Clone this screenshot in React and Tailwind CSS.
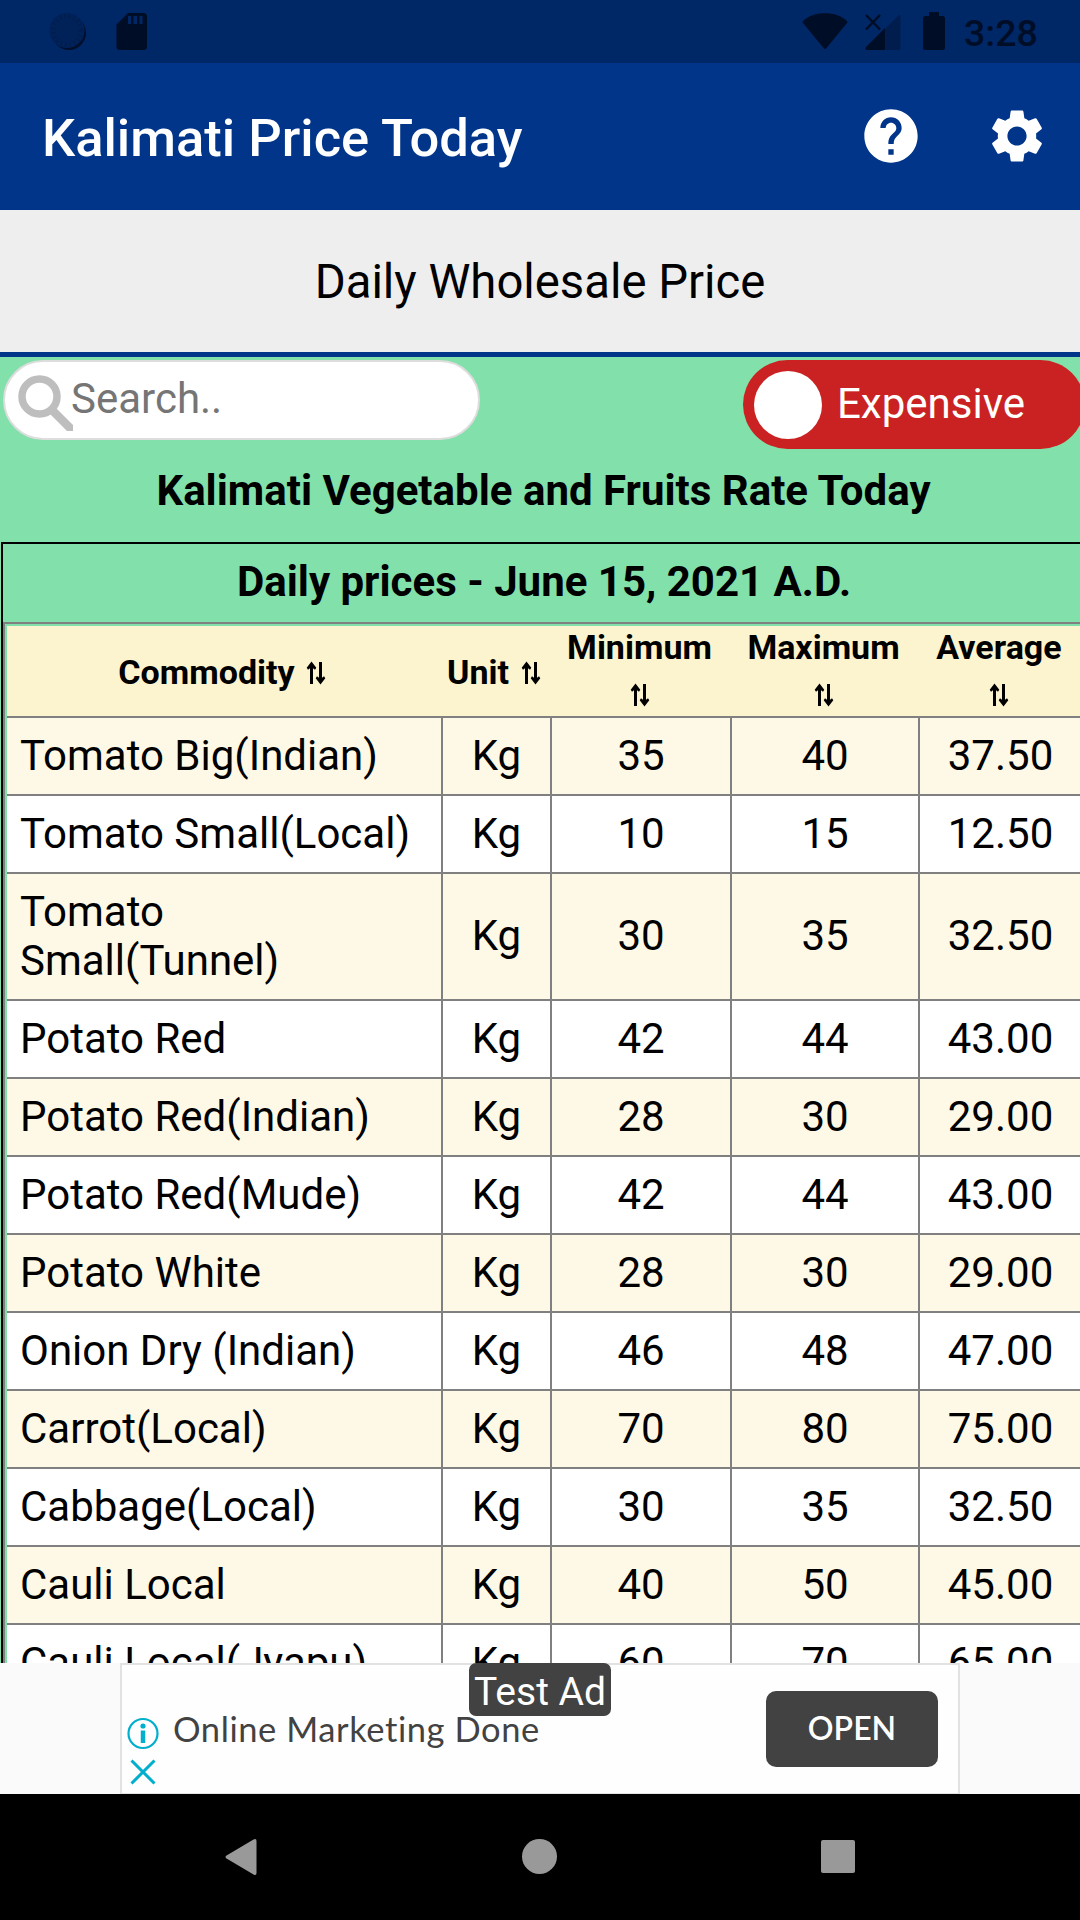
const rows = [
  ["Tomato Big(Indian)", "35", "40", "37.50"],
  ["Tomato Small(Local)", "10", "15", "12.50"],
  ["Tomato Small(Tunnel)", "30", "35", "32.50"],
  ["Potato Red", "42", "44", "43.00"],
  ["Potato Red(Indian)", "28", "30", "29.00"],
  ["Potato Red(Mude)", "42", "44", "43.00"],
  ["Potato White", "28", "30", "29.00"],
  ["Onion Dry (Indian)", "46", "48", "47.00"],
  ["Carrot(Local)", "70", "80", "75.00"],
  ["Cabbage(Local)", "30", "35", "32.50"],
  ["Cauli Local", "40", "50", "45.00"],
  ["Cauli Local(Jyapu)", "60", "70", "65.00"],
];

const columns = "grid grid-cols-[434px_107px_178px_186px_161px] gap-x-[2px]";

function SortArrows() {
  return (
    <svg className="block h-[24px] w-[20px] shrink-0" viewBox="0 0 20 24">
      <path d="M5.500 .5L10.300 6.800L9 8.800L7 7.200V23H4V7.200L2 8.800L.7 6.800zM14.500 23.500L9.700 17.200L11 15.200L13 16.800V1H16V16.800L18 15.200L19.300 17.200z" />
    </svg>
  );
}

function StatusBar() {
  return (
    <div className="flex h-[63px] items-start bg-[#002766] pl-[49px] text-[#000d26]">
      <svg className="mt-[12px] h-[38px] w-[38px]" viewBox="0 0 38 38">
        <circle cx="20" cy="21" r="17" fill="#000f2c" />
        <circle cx="18" cy="18.500" r="17.500" fill="#002259" />
        <circle cx="18" cy="18.500" r="14" fill="none" stroke="#001e50" strokeWidth="5" strokeDasharray="1.500 3" />
      </svg>
      <svg className="mt-[12px] ml-[29px] h-[39px] w-[31px]" viewBox="0 0 31 39">
        <path fill="currentColor" fillRule="evenodd" d="M12 1h15.500Q31 1 31 4.500v30Q31 38 27.500 38H4Q.5 38 .5 34.500V12.500zM12 4v8h3V4zm5.500 0v8h3.500V4zm6 0v8h3V4z" />
      </svg>
      <svg className="mt-[12px] ml-[655px] h-[38px] w-[46px]" viewBox="0 0 46 38">
        <path fill="currentColor" d="M1 9C11-1.500 35-1.500 45 9q.8 1 0 2L24.500 36q-1.500 2-3 0L1 11q-.8-1 0-2z" />
      </svg>
      <svg className="mt-[12px] ml-[17px] h-[39px] w-[36px]" viewBox="0 0 36 39">
        <path fill="#001d4d" d="M20 17L33.500 3.500Q35.500 2 35.500 5v31q0 2-2 2H20z" />
        <path fill="currentColor" d="M20 16v22H3q-4 0-2-3z" />
        <path stroke="currentColor" strokeWidth="2.500" d="M1 3l14 14.500M15 3L1 17.500" />
      </svg>
      <svg className="mt-[12px] ml-[21px] h-[39px] w-[24px]" viewBox="0 0 24 39">
        <path fill="currentColor" d="M7 0h10v4h3.500Q23 4 23 6.500v29Q23 38 20.500 38h-17Q1 38 1 35.500v-29Q1 4 3.500 4H7z" />
      </svg>
      <div className="ml-[18px] pt-[13px] text-[37.500px] leading-[40px] font-medium">3:28</div>
    </div>
  );
}

function AppBar() {
  return (
    <div className="flex h-[147px] items-center bg-[#00358a] pl-[42px] text-white">
      <div className="w-[817px] pt-[3px] text-[52.500px] leading-[62px] font-medium">Kalimati Price Today</div>
      <svg className="-mt-px h-[64px] w-[64px]" viewBox="0 0 24 24" fill="currentColor">
        <path d="M12 2C6.480 2 2 6.480 2 12s4.480 10 10 10 10-4.480 10-10S17.520 2 12 2zm1 17h-2v-2h2v2zm2.070-7.750l-.9.920C13.450 12.900 13 13.500 13 15h-2v-.5c0-1.100.45-2.100 1.170-2.830l1.240-1.260c.37-.36.59-.86.590-1.410 0-1.100-.9-2-2-2s-2 .9-2 2H8c0-2.210 1.790-4 4-4s4 1.790 4 4c0 .88-.36 1.680-.93 2.250z" />
      </svg>
      <svg className="-mt-px ml-[62px] h-[64px] w-[64px]" viewBox="0 0 24 24" fill="currentColor">
        <path d="M19.140 12.940c.04-.3.060-.61.060-.94 0-.32-.02-.64-.07-.94l2.030-1.580c.18-.14.230-.41.120-.61l-1.920-3.320c-.12-.22-.37-.29-.59-.22l-2.390.96c-.5-.38-1.030-.7-1.620-.94l-.36-2.540c-.04-.24-.24-.41-.48-.41h-3.840c-.24 0-.43.17-.47.410l-.36 2.540c-.59.240-1.130.570-1.620.940l-2.390-.96c-.22-.08-.47 0-.59.220L2.740 8.870c-.12.210-.08.470.120.610l2.030 1.580c-.05.3-.09.630-.09.940s.02.640.070.940l-2.030 1.580c-.18.140-.23.410-.12.610l1.920 3.320c.12.220.370.290.590.220l2.390-.96c.5.380 1.030.7 1.620.940l.36 2.540c.05.240.240.410.480.410h3.840c.24 0 .44-.17.470-.41l.36-2.540c.59-.24 1.130-.56 1.620-.94l2.390.96c.22.080.470 0 .59-.22l1.920-3.320c.12-.22.070-.47-.12-.61l-2.010-1.580zM12 15.600c-1.980 0-3.600-1.620-3.600-3.600s1.620-3.600 3.600-3.600 3.600 1.620 3.600 3.600-1.620 3.600-3.600 3.600z" />
      </svg>
    </div>
  );
}

function PriceTable() {
  return (
    <div className="ml-px w-[1090px] border-2 border-black">
      <div className="h-[78px] w-[1082px] pt-[13px] text-center text-[42px] leading-[49px] font-bold">
        Daily prices - June 15, 2021 A.D.
      </div>
      <div className="border-2 border-[#808080] p-[2px]">
        <div className={columns + " h-[90px] items-center bg-[#fcf3cf] text-center text-[34px] leading-[40px] font-bold"}>
          <div className="-ml-[4px] flex items-center justify-center gap-[11px] pt-px">Commodity <span className="pt-[2px]"><SortArrows /></span></div>
          <div className="-ml-[5px] flex items-center justify-center gap-[12px] pt-px">Unit <span className="pt-[2px]"><SortArrows /></span></div>
          {["Minimum", "Maximum", "Average"].map((name) => (
            <div key={name} className="-ml-[3px] flex flex-col items-center">
              <span className="-mt-[9px] h-[56px]">{name}</span>
              <SortArrows />
            </div>
          ))}
        </div>
        {rows.map(([name, min, max, avg], i) => (
          <div key={name} className={columns + " mt-[2px] bg-[#808080] text-center text-[42px] leading-[49px] shadow-[0_-2px_0_#808080] " + (i % 2 ? "[&>div]:bg-white" : "[&>div]:bg-[#fef9e7]") + " [&>div]:flex [&>div]:items-center [&>div]:justify-center [&>div]:pt-[12.900px] [&>div]:pb-[14.100px]"}>
            <div className="pl-[13px] text-left"><span className="w-full pr-[10px]">{name}</span></div>
            <div>Kg</div>
            <div>{min}</div>
            <div>{max}</div>
            <div>{avg}</div>
          </div>
        ))}
      </div>
    </div>
  );
}

function AdBanner() {
  return (
    <div className="flex h-[131px] justify-center bg-[#fafafa]">
      <div className="relative flex w-[840px] border-2 border-b border-[#e2e2e2] bg-[#fefefe]">
        <svg className="mt-[52px] ml-[4px] h-[72px] w-[34px] shrink-0" viewBox="0 0 34 72" fill="none" stroke="#00aecd">
          <circle cx="17" cy="16.500" r="14.500" strokeWidth="2.200" />
          <path strokeWidth="4.500" d="M17 13.500v12.500" />
          <circle cx="17" cy="9" r="2.600" fill="#00aecd" stroke="none" />
          <path strokeWidth="3" d="M5.500 43.500l23 23M28.500 43.500l-23 23" />
        </svg>
        <div className="mt-[43px] ml-[13px] w-[593px] font-['Lato',sans-serif] text-[34.500px] leading-[42px] tracking-[0.570px] text-[#424242]">Online Marketing Done</div>
        <div className="mt-[26px] flex h-[76px] w-[172px] items-center justify-center rounded-[10px] bg-[#424242] pb-[3px] font-['Lato',sans-serif] text-[32px] leading-none font-semibold text-white">OPEN</div>
        <div className="absolute top-[-2px] left-[347px] flex h-[53px] w-[142px] items-center justify-center rounded-[7px] bg-[#424242] pt-[5px] text-[39px] leading-none text-white">Test Ad</div>
      </div>
    </div>
  );
}

function NavBar() {
  return (
    <div className="flex h-[126px] items-start bg-black pt-[44px] pl-[225px]">
      <svg className="h-[38px] w-[32px]" viewBox="0 0 32 38" fill="#999">
        <path d="M1.500 17.500L28.500 1.500Q31.500 0 31.500 3v32q0 3-3 1.500L1.500 20.500Q-.5 19 1.500 17.500z" />
      </svg>
      <div className="mt-px ml-[265px] h-[35px] w-[35px] rounded-full bg-[#999]" />
      <div className="mt-[2px] ml-[264px] h-[33px] w-[34px] rounded-[2px] bg-[#999]" />
    </div>
  );
}

export default function App() {
  return (
    <div className="flex h-[1920px] w-[1080px] flex-col overflow-hidden font-['Roboto',sans-serif] text-black">
      <StatusBar />
      <AppBar />
      <div className="h-[147px] border-b-[5px] border-[#00358a] bg-[#eeeeee] pt-[44px] text-center text-[47.250px] leading-[56px]">Daily Wholesale Price</div>
      <div className="h-[1306px] overflow-hidden bg-[#82e0aa]">
        <div className="flex h-[93px] justify-between pt-[3px] pl-[3px]">
          <div className="flex h-[80px] w-[477px] items-start rounded-[40px] border-2 border-[#dddddd] bg-white pl-[13px]">
            <svg className="mt-[13px] h-[56px] w-[55px]" viewBox="0 0 55 56" fill="none" stroke="#bebebe">
              <circle cx="21.500" cy="21.500" r="17.500" strokeWidth="7.500" />
              <path strokeWidth="8.500" d="M35 36l20 20" />
            </svg>
            <div className="-ml-[2px] pt-[12px] text-[42px] leading-[49px] text-[#757575]">Search..</div>
          </div>
          <div className="-mr-[5px] flex h-[89px] w-[342px] items-center rounded-[44.500px] bg-[#ca2222] pl-[11px] text-white">
            <div className="h-[68px] w-[68px] rounded-full bg-white" />
            <div className="ml-[15px] pb-[2px] text-[42px] leading-[49px]">Expensive</div>
          </div>
        </div>
        <div className="h-[92px] w-[1087px] pt-[16px] text-center text-[42px] leading-[49px] font-bold">Kalimati Vegetable and Fruits Rate Today</div>
        <PriceTable />
      </div>
      <AdBanner />
      <NavBar />
    </div>
  );
}
